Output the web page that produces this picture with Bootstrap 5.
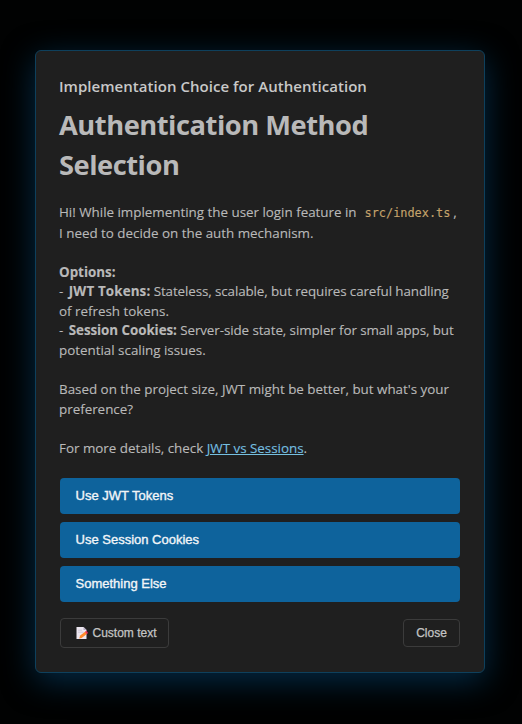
<!DOCTYPE html>
<html lang="en" data-bs-theme="dark">
<head>
<meta charset="utf-8">
<meta name="viewport" content="width=device-width, initial-scale=1">
<title>Authentication Method Selection</title>
<link href="https://cdn.jsdelivr.net/npm/bootstrap@5.3.0/dist/css/bootstrap.min.css" rel="stylesheet">
<style>
body{background:#010202;font-family:"Open Sans","Noto Sans",sans-serif;color:#b9b9b9;height:724px;overflow:hidden;padding:50px 37px 0 35px}
.dialog{width:450px;height:623px;background:#1f1f1f;border:1px solid #0e405c;border-radius:6px;padding:24px 24px 24px 23px;box-shadow:0 8px 32px rgba(5,54,90,.78)}
.dialog-title{font-size:15px;line-height:22px;font-weight:600;color:#c8c8c8;letter-spacing:.04px}
.headline{font-size:27.3px;line-height:40px;font-weight:700;color:#b9b9b9;margin-top:8px;letter-spacing:-.48px}
.copy{font-size:13.4px;line-height:19.6px;letter-spacing:-.01px;-webkit-text-stroke:.12px}
.ln{display:block;white-space:nowrap}
.intro{line-height:21px;margin-top:17px}
.para{margin-top:19.4px}
.intro + .para{margin-top:18.6px}
.dash{margin-right:2px}
.jwt{letter-spacing:.13px}
.jwt + .tail{letter-spacing:-.11px}
.sess{letter-spacing:-.07px}
.tail{letter-spacing:-.09px}
.path{font:11.9px/1 "DejaVu Sans Mono",monospace;color:#c5a36b;padding:0 3px 0 4.5px}
.ref{color:#75bfe0}
.choices{margin:19.6px 0 0 1px}
.choice{height:36px;background:#0e639c;color:#f2f5f8;border:0;border-radius:4px;font:13px/16px "Liberation Sans",Arial,sans-serif;padding:0 15.5px;-webkit-text-stroke:.35px}
.choice:hover{background:#1177bb;color:#fff}
.actions{margin:16px 0 0 1px}
.ghost{height:30px;border:1px solid #3b3b3b;border-radius:4px;color:#c4c4c4;font:12px/16px "Liberation Sans",Arial,sans-serif;padding:0 12px;-webkit-text-stroke:.25px;white-space:nowrap}
.ghost.custom{width:109px;padding:0 0 0 13.5px}
.ghost.close-it{height:28px;width:57px}
.memo{width:14px;height:14px;flex:none}
</style>
</head>
<body>
<main class="dialog d-flex flex-column">
<div class="dialog-title ln">Implementation Choice for Authentication</div>
<h1 class="headline mb-0"><span class="ln">Authentication Method</span><span class="ln">Selection</span></h1>
<div class="copy">
<div class="intro"><span class="ln">Hi! While implementing the user login feature in <code class="path">src/index.ts</code>,</span><span class="ln">I need to decide on the auth mechanism.</span></div>
<div class="para"><span class="ln"><b>Options:</b></span><span class="ln"><span class="dash">- </span><b class="jwt">JWT Tokens:</b><span class="tail"> Stateless, scalable, but requires careful handling</span></span><span class="ln">of refresh tokens.</span><span class="ln"><span class="dash">- </span><b class="sess">Session Cookies:</b><span class="tail"> Server-side state, simpler for small apps, but</span></span><span class="ln">potential scaling issues.</span></div>
<div class="para"><span class="ln">Based on the project size, JWT might be better, but what's your</span><span class="ln">preference?</span></div>
<div class="para"><span class="ln">For more details, check <a class="ref" href="#">JWT vs Sessions</a>.</span></div>
</div>
<div class="choices d-grid gap-2">
<button class="btn choice text-start">Use JWT Tokens</button>
<button class="btn choice text-start">Use Session Cookies</button>
<button class="btn choice text-start">Something Else</button>
</div>
<div class="actions d-flex justify-content-between align-items-center">
<button class="btn ghost custom d-flex align-items-center gap-1">
<svg class="memo" viewBox="0 0 14 14"><path fill="#ece6f0" d="M1.5 1h7l3 3v9h-10z"/><path fill="#b9adc5" d="M8.5 1l3 3h-3z"/><path stroke="#c9bfd2" stroke-width=".8" d="M3 4.2h4M3 6.2h5.5"/><path fill="#ff8a2c" d="M4.2 12.4l1-2.9 5.2-4 1.7 2.2-5.4 4.2z"/><path fill="#e9305a" d="M10 5.8l1.4-1 1.8 2.2-1.4 1.1z"/></svg>
<span>Custom text</span></button>
<button class="btn ghost close-it">Close</button>
</div>
</main>
<script src="https://cdn.jsdelivr.net/npm/bootstrap@5.3.0/dist/js/bootstrap.bundle.min.js"></script>
</body>
</html>
